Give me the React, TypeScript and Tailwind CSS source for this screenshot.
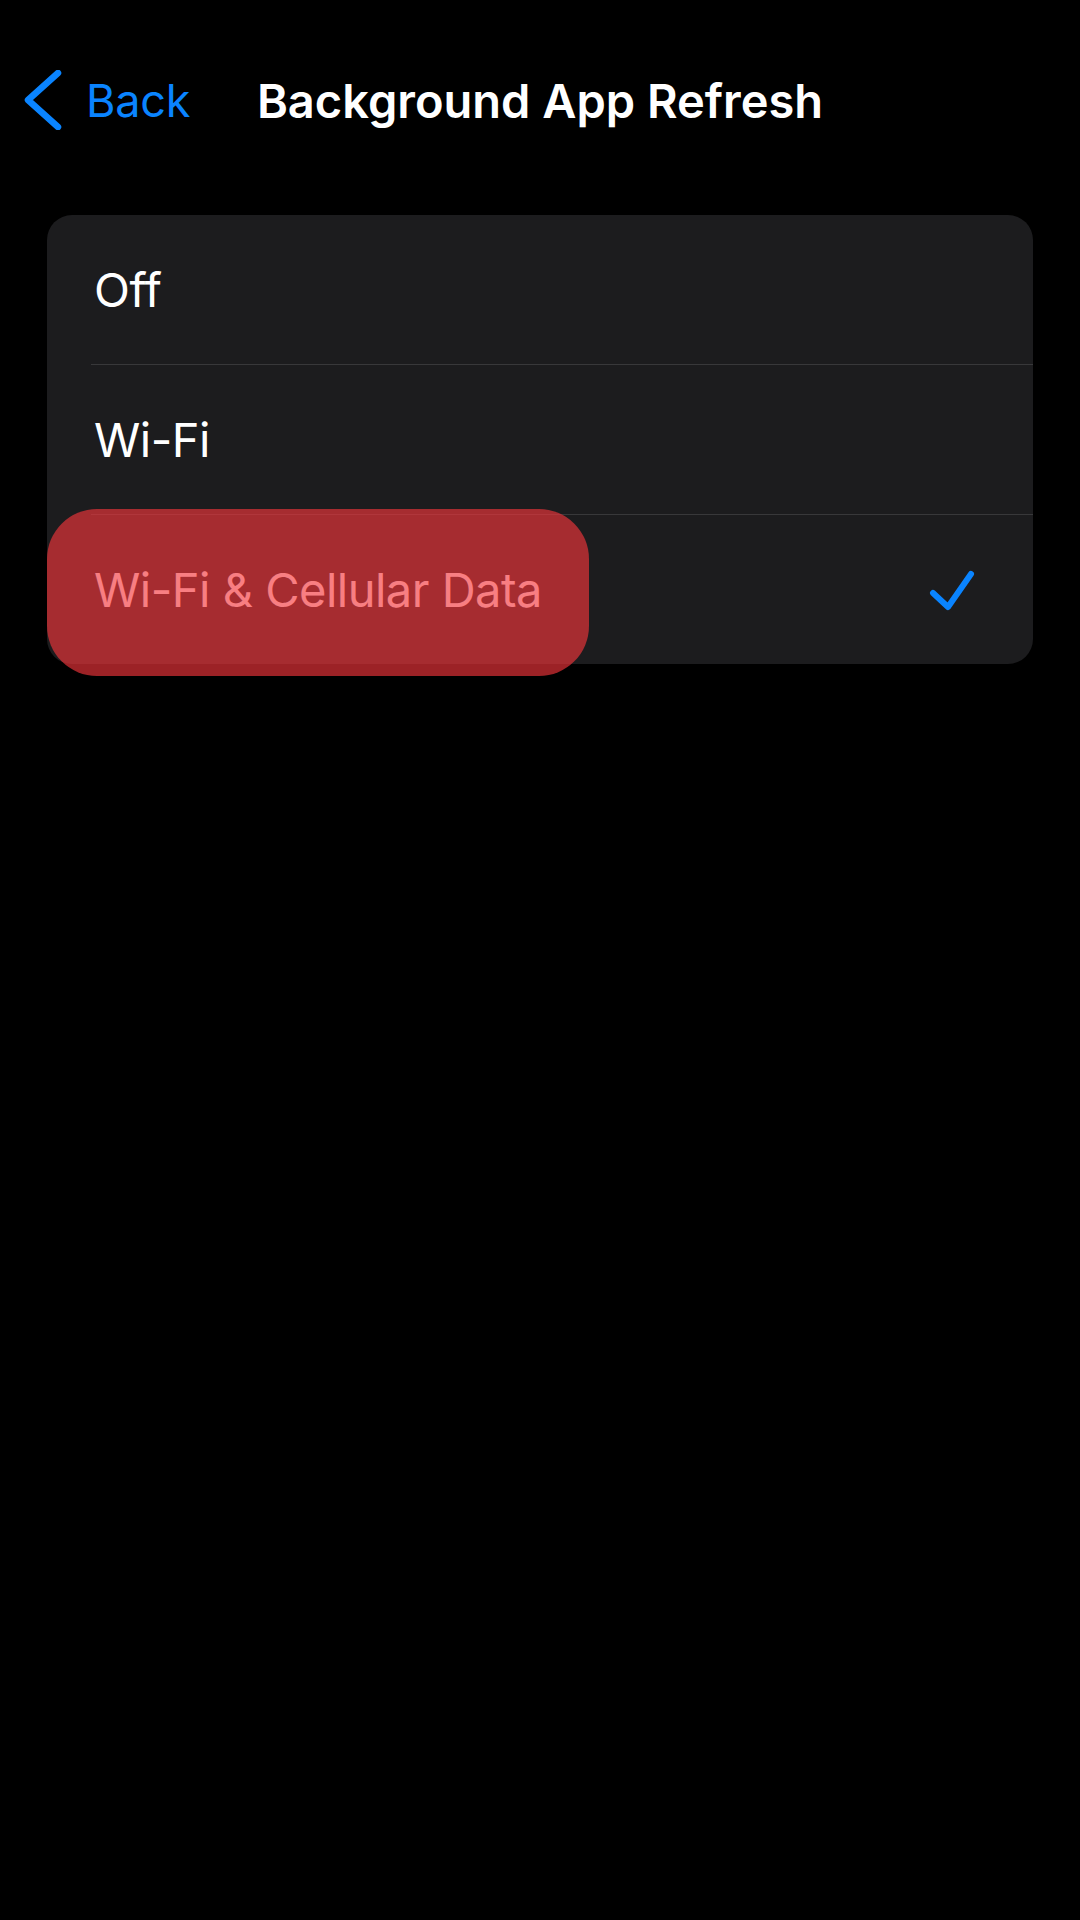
import React from "react";

const rows = ["Off", "Wi-Fi", "Wi-Fi & Cellular Data"];

export default function App() {
  return (
    <div
      className="w-[1080px] min-h-[1920px] bg-black text-white"
      style={{ fontFamily: "Inter, 'Noto Sans', sans-serif" }}
    >
      <header className="grid h-[200px] grid-cols-[1fr_auto_1fr] items-center">
        <div className="flex items-center pl-[24px]">
          <svg width="40" height="60" viewBox="0 0 40 60" fill="none">
            <path
              d="M34 3 L4 30 L34 57"
              stroke="#0a84ff"
              strokeWidth="6.5"
              strokeLinecap="round"
              strokeLinejoin="round"
            />
          </svg>
          <span className="ml-[22px] text-[45px] leading-none tracking-[-0.2px] text-[#0a84ff]">
            Back
          </span>
        </div>
        <h1 className="text-[47px] font-semibold leading-none tracking-[0px]">
          Background App Refresh
        </h1>
        <div />
      </header>

      <div className="relative mx-[47px] mt-[15px] rounded-[25px] bg-[#1c1c1e]">
        {rows.map((r, i) => (
          <div key={r}>
            <div className="flex h-[149px] items-center justify-between pl-[47px] pr-[58px]">
              <span className="text-[47px] leading-none tracking-[-0.5px]">{r}</span>
              {i === 2 && (
                <svg width="46" height="44" viewBox="0 0 46 44" fill="none">
                  <path
                    d="M4 25 L19 39 L42 6"
                    stroke="#0a84ff"
                    strokeWidth="6"
                    strokeLinecap="round"
                    strokeLinejoin="round"
                  />
                </svg>
              )}
            </div>
            {i < 2 && <div className="ml-[44px] h-[1px] bg-[#38383a]" />}
          </div>
        ))}
        <div className="absolute left-0 top-[294px] h-[167px] w-[542px] rounded-[50px] bg-[rgba(244,53,59,0.64)]" />
      </div>
    </div>
  );
}
